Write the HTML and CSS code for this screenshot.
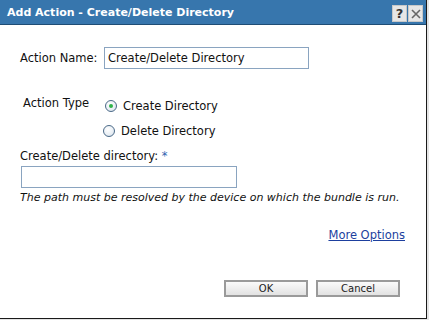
FILE: index.html
```html
<!DOCTYPE html>
<html lang="en">
<head>
    <meta charset="UTF-8">
    <title>Add Action - Create/Delete Directory</title>
    <link rel="stylesheet" href="styles.css">
</head>
<body>
    <div class="dialog">
        <div class="titlebar">
            <span class="title">Add Action - Create/Delete Directory</span>
            <div class="tools">
                <span class="tool">?</span>
                <span class="tool">
                    <svg width="12" height="12" viewBox="0 0 12 12"><path d="M2 2 L10 10 M10 2 L2 10" stroke="#666" stroke-width="1.6" fill="none"/></svg>
                </span>
            </div>
        </div>

        <div class="content">
            <div class="name-row">
                <label class="name-label">Action Name:</label>
                <input class="field name-field" type="text" value="Create/Delete Directory">
            </div>

            <div class="type-row">
                <span class="type-label">Action Type</span>
                <div class="options">
                    <div class="option first"><span class="radio checked"></span>Create Directory</div>
                    <div class="option"><span class="radio"></span>Delete Directory</div>
                </div>
            </div>

            <div class="dir-label">Create/Delete directory: <span class="req">*</span></div>
            <input class="field dir-field" type="text" value="">
            <div class="hint">The path must be resolved by the device on which the bundle is run.</div>

            <div class="more"><a href="#">More Options</a></div>

            <div class="buttons">
                <button class="btn">OK</button>
                <button class="btn">Cancel</button>
            </div>
        </div>
    </div>
</body>
</html>
```

FILE: styles.css
```css
* {
    margin: 0;
    padding: 0;
    box-sizing: border-box;
}

body {
    font-family: "DejaVu Sans", Verdana, sans-serif;
    font-size: 11.5px;
    color: #111;
    background: #e4e4e4;
    width: 429px;
    height: 320px;
    overflow: hidden;
}

.dialog {
    width: 427px;
    height: 319px;
    background: #fff;
    border-right: 1px solid #1a1a1a;
    border-bottom: 1px solid #1a1a1a;
}

.titlebar {
    height: 25px;
    background: #3776ad;
    border-bottom: 1px solid #1f4d75;
    display: flex;
    align-items: center;
    justify-content: space-between;
    padding: 0 3px 0 7px;
}

.title {
    color: #fff;
    font-weight: bold;
    font-size: 11px;
}

.tools {
    display: flex;
    gap: 1px;
    margin-top: 3px;
}

.tool {
    width: 15px;
    height: 17px;
    background: #e6e6e6;
    border: 1px solid #c8c8c8;
    display: flex;
    align-items: center;
    justify-content: center;
    font-weight: bold;
    font-size: 13px;
    color: #333;
}

.content {
    padding: 22px 21px 0 20px;
}

.name-row {
    display: flex;
    align-items: center;
}

.name-label {
    width: 84px;
}

.field {
    font-family: "DejaVu Sans", Verdana, sans-serif;
    font-size: 11.5px;
    height: 22px;
    border: 1px solid #8aa4c0;
    padding: 0 3px;
    outline: none;
    color: #111;
}

.name-field {
    width: 205px;
}

.type-row {
    display: flex;
    margin-top: 24px;
}

.type-label {
    width: 83px;
    padding-left: 3px;
    line-height: 20px;
}

.option {
    display: flex;
    align-items: center;
    height: 25px;
    gap: 6px;
}

.option.first {
    margin-left: 2px;
    gap: 6px;
}

.radio {
    width: 12px;
    height: 12px;
    border-radius: 50%;
    border: 1px solid #4b6a88;
    background: radial-gradient(circle at 40% 35%, #fff 0%, #e8eef4 60%, #c9d5e2 100%);
    display: flex;
    align-items: center;
    justify-content: center;
}

.radio.checked::after {
    content: "";
    width: 4px;
    height: 4px;
    border-radius: 50%;
    background: #2fb24a;
}

.dir-label {
    margin-top: 5px;
    line-height: 16px;
}

.req {
    color: #2f63b0;
}

.dir-field {
    display: block;
    margin: 2px 0 0 1px;
    width: 216px;
}

.hint {
    margin-top: 2px;
    line-height: 16px;
    font-style: italic;
    font-size: 11px;
}

.more {
    margin-top: 21px;
    line-height: 16px;
    text-align: right;
}

.more a {
    color: #1d3f9e;
}

.buttons {
    display: flex;
    justify-content: flex-end;
    gap: 8px;
    margin-top: 37px;
    padding-right: 5px;
}

.btn {
    width: 84px;
    height: 17px;
    border: 2px solid #9a9a9a;
    background: linear-gradient(#fafafa, #e2e2e2);
    font-family: "DejaVu Sans", Verdana, sans-serif;
    font-size: 10px;
    color: #222;
}
```
